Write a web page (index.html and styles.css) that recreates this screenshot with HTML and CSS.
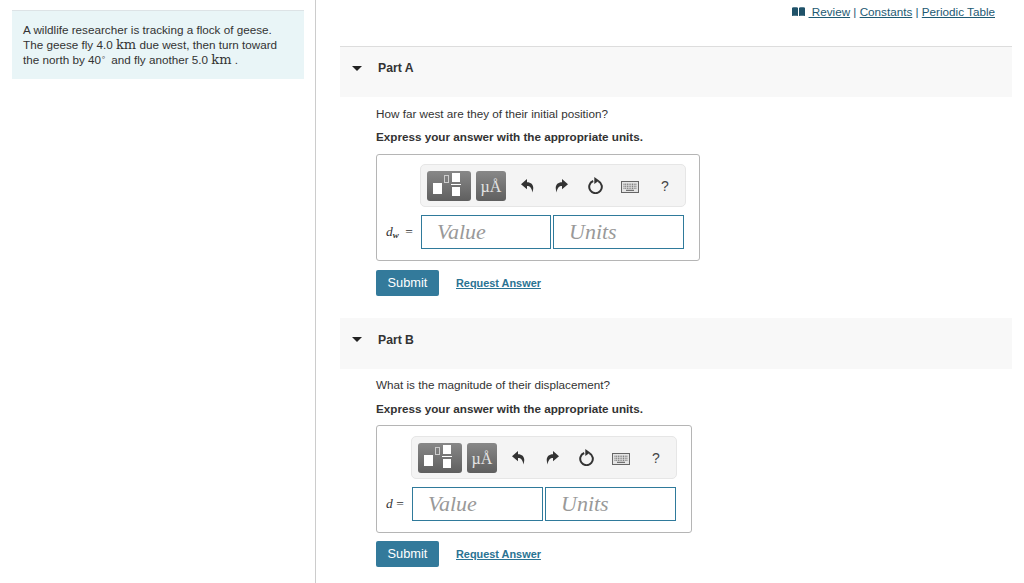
FILE: index.html
```html
<!DOCTYPE html>
<html>
<head>
    <meta name="viewport" content="width=device-width, initial-scale=1.0">
    <title>Part A and Part B</title>
    <link rel="stylesheet" href="styles.css">
</head>
<body>
    <svg class="defs" width="0" height="0">
        <symbol id="i-undo" viewBox="0 0 13 14"><path d="M6 0 0 5.300 6 10.200V7c2.900 0 4.800 1.800 5.300 6.500C13.700 7.500 11.600 3.400 6 3.300z"/></symbol>
        <symbol id="i-redo" viewBox="0 0 13 14"><path d="M7 0 13 5.300 7 10.200V7C4.100 7 2.200 8.800 1.700 13.500-.7 7.500 1.400 3.400 7 3.300z"/></symbol>
        <symbol id="i-reset" viewBox="0 0 16 17"><path d="M10.300 4.200A6.300 6.300 0 1 1 5.200 4" fill="none" stroke="currentColor" stroke-width="2"/><path d="M6.300 0 11.200 3.600 6.300 7z"/></symbol>
        <symbol id="i-keys" viewBox="0 0 18 12"><rect x=".5" y=".5" width="17" height="11" fill="#e4e4e4" stroke="#666"/><path d="M2.500 3.200h13M2.500 5.200h13M2.500 7.200h13" stroke="#555" stroke-dasharray="1 .7"/><path d="M5 9.300h8" stroke="#555"/></symbol>
    </svg>
    <div class="layout">
        <div class="side">
            <div class="intro">
                A wildlife researcher is tracking a flock of geese.<br>
                The geese fly 4.0 <span class="unit">km</span> due west, then turn toward<br>
                the north by 40<sup class="deg">∘</sup> and fly another 5.0 <span class="unit">km</span> .
            </div>
        </div>
        <div class="main">
            <div class="links">
                <svg class="book" viewBox="0 0 13 9"><path d="M0 .8C2 .2 4 .2 6 .8V9C4 8.500 2 8.500 0 9zM7 .8c2-.6 4-.6 6 0V9c-2-.5-4-.5-6 0z"/></svg>
                <a href="#">&nbsp;Review</a> | <a href="#">Constants</a> | <a href="#">Periodic Table</a>
            </div>

            <div class="part-head part-head-first"><span class="arrow"></span>Part A</div>
            <div class="part-body">
                <p class="question">How far west are they of their initial position?</p>
                <p class="express">Express your answer with the appropriate units.</p>
                <div class="answer answer-a">
                    <div class="toolbar toolbar-a">
                        <span class="tool tool-wide">
                            <span class="sq-big"></span><span class="sq-small"></span>
                            <span class="frac"><i></i><b></b><i></i></span>
                        </span>
                        <span class="tool tool-mu">µÅ</span>
                        <svg class="ico ico-undo"><use href="#i-undo"/></svg>
                        <svg class="ico ico-redo"><use href="#i-redo"/></svg>
                        <svg class="ico ico-reset"><use href="#i-reset"/></svg>
                        <svg class="ico ico-keys"><use href="#i-keys"/></svg>
                        <span class="help">?</span>
                    </div>
                    <div class="entry">
                        <span class="var var-a"><i>d</i><sub>w</sub> =</span>
                        <input class="field" placeholder="Value">
                        <input class="field" placeholder="Units">
                    </div>
                </div>
                <div class="actions">
                    <button type="button" class="submit">Submit</button>
                    <a class="request" href="#">Request Answer</a>
                </div>
            </div>

            <div class="part-head"><span class="arrow"></span>Part B</div>
            <div class="part-body part-body-b">
                <p class="question">What is the magnitude of their displacement?</p>
                <p class="express">Express your answer with the appropriate units.</p>
                <div class="answer answer-b">
                    <div class="toolbar toolbar-b">
                        <span class="tool tool-wide">
                            <span class="sq-big"></span><span class="sq-small"></span>
                            <span class="frac"><i></i><b></b><i></i></span>
                        </span>
                        <span class="tool tool-mu">µÅ</span>
                        <svg class="ico ico-undo"><use href="#i-undo"/></svg>
                        <svg class="ico ico-redo"><use href="#i-redo"/></svg>
                        <svg class="ico ico-reset"><use href="#i-reset"/></svg>
                        <svg class="ico ico-keys"><use href="#i-keys"/></svg>
                        <span class="help">?</span>
                    </div>
                    <div class="entry">
                        <span class="var var-b"><i>d</i> =</span>
                        <input class="field" placeholder="Value">
                        <input class="field" placeholder="Units">
                    </div>
                </div>
                <div class="actions">
                    <button type="button" class="submit">Submit</button>
                    <a class="request" href="#">Request Answer</a>
                </div>
            </div>
        </div>
    </div>
</body>
</html>
```

FILE: styles.css
```css
html, body {
    margin: 0;
    height: 100%;
    overflow: hidden;
}
body {
    font-family: "Liberation Sans", Arial, sans-serif;
    font-size: 11.7px;
    color: #333;
    background: #fff;
}
.defs {
    position: absolute;
}
.layout {
    display: flex;
    height: 583px;
}

/* left column */
.side {
    box-sizing: border-box;
    padding: 10px 11px 0 12px;
    border-right: 1px solid #ccc;
    flex: none;
    width: 316px;
}
.intro {
    height: 69px;
    box-sizing: border-box;
    padding: 11px 11px 0;
    background: #e9f5f7;
    border-top: 1px solid #dde3e6;
    line-height: 15px;
}
.unit {
    font-family: "DejaVu Serif", serif;
    font-size: 13px;
    line-height: 0;
}
.deg {
    font-family: "DejaVu Sans", sans-serif;
    font-size: 8px;
    line-height: 0;
    vertical-align: 4px;
    margin-right: 2px;
    color: #666;
}

/* right column */
.main {
    width: 672px;
    margin-left: 24px;
    flex: none;
}
.links {
    height: 46px;
    box-sizing: border-box;
    padding: 5px 17px 0 0;
    text-align: right;
    line-height: 13px;
    color: #1d5a73;
}
.links a {
    color: #1d5a73;
}
.book {
    width: 13px;
    height: 9px;
    fill: #1f5269;
}
.part-head {
    height: 51px;
    box-sizing: border-box;
    display: flex;
    align-items: center;
    background: #f8f8f8;
    font-size: 12.2px;
    font-weight: bold;
    padding-bottom: 8px;
    padding-left: 38px;
    position: relative;
}
.part-head-first {
    border-top: 1px solid #ddd;
}
.arrow {
    position: absolute;
    left: 12px;
    top: 19px;
    border-left: 5px solid transparent;
    border-right: 5px solid transparent;
    border-top: 5px solid #222;
}
.part-body {
    padding: 10px 0 22px 36px;
}
.part-body-b {
    padding-top: 9px;
}
.question {
    margin: 0;
    line-height: 14px;
}
.express {
    margin: 9px 0;
    line-height: 14px;
    font-weight: bold;
}
.part-body-b .express {
    margin-top: 10px;
}
.answer {
    box-sizing: border-box;
    border: 1px solid #b5b5b5;
    border-radius: 3px;
    padding-top: 9px;
}
.answer-a {
    width: 324px;
    height: 107px;
    margin-top: 10px;
}
.answer-b {
    width: 316px;
    height: 108px;
}
.toolbar {
    height: 43px;
    width: 266px;
    box-sizing: border-box;
    display: flex;
    align-items: center;
    background: #f4f4f4;
    border: 1px solid #e6e6e6;
    border-radius: 5px;
    padding-left: 6px;
}
.toolbar-a {
    margin-left: 43px;
}
.toolbar-b {
    margin-left: 34px;
    margin-top: 1px;
}
.tool {
    height: 30px;
    box-sizing: border-box;
    border-radius: 3px;
    background: linear-gradient(#888, #5f5f5f);
    position: relative;
    flex: none;
}
.tool-wide {
    width: 44px;
    margin-right: 5px;
}
.tool-mu {
    width: 30px;
    color: #e4e4e4;
    font-family: "Liberation Serif", serif;
    font-size: 16px;
    line-height: 32px;
    text-align: center;
}
.sq-big {
    position: absolute;
    left: 6px;
    top: 12px;
    width: 9px;
    height: 11px;
    background: #fff;
}
.sq-small {
    position: absolute;
    left: 17px;
    top: 4px;
    width: 3px;
    height: 6px;
    border: 1px solid #ccc;
}
.frac i {
    position: absolute;
    left: 25px;
    width: 8px;
    height: 9px;
    background: #fff;
}
.frac i:first-child {
    top: 2px;
}
.frac i:last-child {
    top: 16px;
}
.frac b {
    position: absolute;
    left: 24px;
    top: 13px;
    width: 10px;
    height: 1px;
    background: #fff;
}
.ico {
    flex: none;
    fill: #333;
    color: #333;
}
.ico-undo,
.ico-redo {
    width: 13px;
    height: 14px;
}
.ico-undo {
    margin-left: 15px;
}
.ico-redo {
    margin-left: 21px;
}
.ico-reset {
    width: 16px;
    height: 17px;
    margin-left: 20px;
}
.ico-keys {
    width: 18px;
    height: 12px;
    margin-left: 17px;
    margin-top: 3px;
}
.help {
    margin-left: 22px;
    font-size: 14px;
    color: #444;
}
.entry {
    display: flex;
    align-items: center;
    margin-top: 8px;
}
.var {
    font-family: "Liberation Serif", serif;
    font-size: 13.5px;
    box-sizing: border-box;
    padding-left: 9px;
    white-space: nowrap;
}
.var sub {
    font-size: 9px;
    font-style: italic;
    font-weight: bold;
    line-height: 0;
    vertical-align: -2px;
    margin-right: 3px;
}
.var-a {
    width: 44px;
}
.var-b {
    width: 35px;
}
.field {
    width: 131px;
    height: 34px;
    box-sizing: border-box;
    margin: 0 2px 0 0;
    padding: 0 15px;
    border: 1px solid #2f7a9b;
    border-radius: 0;
    background: #fff;
    font-family: "Liberation Serif", serif;
    font-style: italic;
    font-size: 22px;
}
.answer-a .field:nth-child(2) {
    width: 130px;
}
.field::placeholder {
    color: #999;
    opacity: 1;
}
.actions {
    display: flex;
    align-items: center;
    margin-top: 9px;
}
.part-body-b .actions {
    margin-top: 8px;
}
.submit {
    width: 63px;
    height: 26px;
    padding: 0 0 1px;
    border: none;
    border-radius: 2px;
    background: #337a9b;
    color: #fff;
    font-family: "Liberation Sans", Arial, sans-serif;
    font-size: 12.800px;
}
.request {
    margin-left: 17px;
    margin-bottom: 1px;
    color: #2a7393;
    font-weight: bold;
    font-size: 10.900px;
}
```
